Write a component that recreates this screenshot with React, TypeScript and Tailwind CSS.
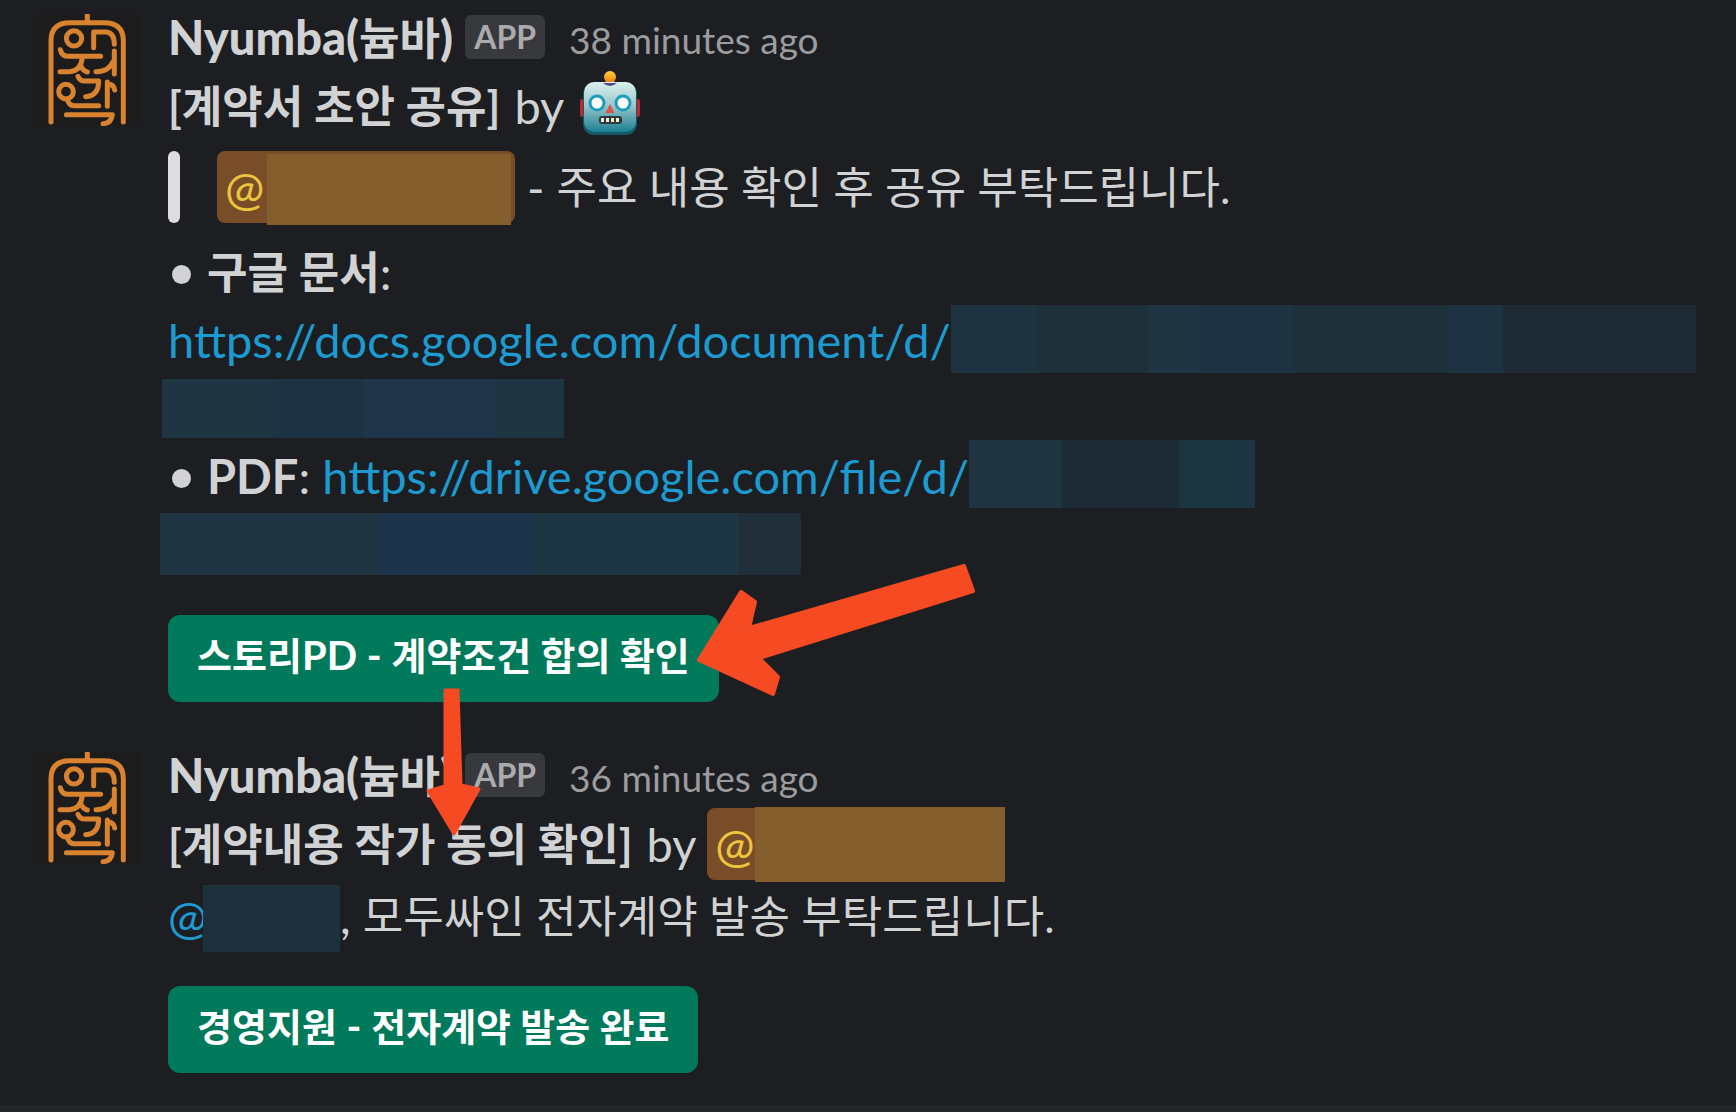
import type { ReactNode } from 'react';
import clsx from 'clsx';

const latin = "font-['Lato','Noto_Sans_CJK_KR',sans-serif]";

function Avatar() {
  return (
    <svg viewBox="36 42 324 336" className="w-[108px] h-28 shrink-0" role="img" aria-label="Nyumba">
      <rect x="36" y="42" width="324" height="336" rx="24" fill="#1c1c1d" />
      <g fill="none" stroke="#d9822f" strokeWidth="15" strokeLinecap="round" strokeLinejoin="round">
        <path d="M93 366V122Q93 68 150 68H252Q310 68 310 122V366" />
        <path d="M202 46V66" />
        <circle cx="162" cy="115" r="23" />
        <path d="M221 143V96H258Q283 98 283 133" />
        <path d="M121 149Q125 169 145 169H242" />
        <path d="M187 172Q183 214 148 215H120M182 196Q188 212 202 216" />
        <path d="M283 153V222M280 184Q266 216 228 215" />
        <circle cx="138" cy="275" r="22" />
        <path d="M174 229Q180 245 198 243H236Q236 288 197 290" />
        <path d="M142 297Q146 317 162 317H236" />
        <path d="M262 319V246M265 252Q282 254 284 270" />
        <path d="M139 344H277Q274 370 249 371" />
      </g>
    </svg>
  );
}

function Robot() {
  return (
    <svg viewBox="0 0 62 66" className="w-[62px] h-[66px] shrink-0" role="img" aria-label="robot">
      <defs>
        <linearGradient id="robot-face" x1="0" y1="0" x2="0" y2="1">
          <stop offset="0" stopColor="#d9f1ee" />
          <stop offset="0.45" stopColor="#9fc9cc" />
          <stop offset="1" stopColor="#1b7f93" />
        </linearGradient>
        <linearGradient id="robot-bulb" x1="0" y1="0" x2="0" y2="1">
          <stop offset="0" stopColor="#ffd23c" />
          <stop offset="1" stopColor="#ef7a12" />
        </linearGradient>
      </defs>
      <rect x="1" y="29" width="8" height="18" rx="3" fill="#c2272d" />
      <rect x="53" y="29" width="8" height="18" rx="3" fill="#c2272d" />
      <ellipse cx="31" cy="15" rx="7" ry="5" fill="#5b4680" />
      <circle cx="31" cy="7" r="6" fill="url(#robot-bulb)" />
      <rect x="4" y="13" width="54" height="52" rx="11" fill="#14596b" />
      <rect x="5" y="12" width="52" height="50" rx="10" fill="url(#robot-face)" />
      <path d="M24 13Q31 19 38 13Z" fill="#5b4680" />
      <circle cx="18" cy="33" r="7" fill="#fff" stroke="#1c9dbd" strokeWidth="3" />
      <circle cx="44" cy="33" r="7" fill="#fff" stroke="#1c9dbd" strokeWidth="3" />
      <path d="M31 34L35.500 43H26.500Z" fill="#dc5148" />
      <rect x="20" y="46" width="23" height="8" rx="3" fill="#2b3a3c" />
      <path d="M22 48h3v4h-3zM27 48h3v4h-3zM32 48h3v4h-3zM37 48h3v4h-3z" fill="#f2ead2" />
    </svg>
  );
}

// Korean glyphs run slightly smaller than the Latin ones
function Ko({ children, bold }: { children: ReactNode; bold?: boolean }) {
  return <span className={clsx('text-[44px]', bold && 'font-bold')}>{children}</span>;
}

function Line({ children, className }: { children: ReactNode; className?: string }) {
  return <div className={clsx('flex items-center h-[68px] whitespace-pre', className)}>{children}</div>;
}

function Bullet() {
  return <span className="mt-1 ml-1 mr-4 h-[19px] w-[19px] rounded-full bg-[#d1d2d3]" />;
}

function MessageHeader({ time }: { time: string }) {
  return (
    <div className="flex items-center h-[72px] whitespace-pre">
      <h2 className="pt-0.5 font-black">
        Nyumba(<span className="text-[44px] font-bold">늄바</span>)
      </h2>
      <span className="mt-0.5 ml-3 flex h-11 w-20 items-center justify-center rounded-md bg-[#37393c] text-[32px] leading-none font-bold text-[#ababad]">
        APP
      </span>
      <time className="ml-6 pt-2 text-[37px] text-[#9b9c9e]">{time}</time>
    </div>
  );
}

function ActionButton({ children }: { children: ReactNode }) {
  return (
    <button
      type="button"
      className="h-[87px] rounded-xl bg-[#007a5a] px-[29px] pb-2 text-[38px] font-bold whitespace-pre text-white hover:bg-[#148567]"
    >
      {children}
    </button>
  );
}

export default function App() {
  return (
    <div className={clsx('relative min-h-screen overflow-hidden bg-[#1c1e21] text-[47px] leading-[68px] text-[#d1d2d3] flex flex-col', latin)}>
      <main className="flex-1 pl-8">
        {/* Draft shared */}
        <article className="flex gap-7">
          <div className="pt-3.5">
            <Avatar />
          </div>
          <div className="flex-1">
            <MessageHeader time="38 minutes ago" />
            <Line>
              <Ko bold>[계약서 초안 공유]</Ko>
              <span className="ml-0.5"> by </span>
              <span className="ml-1 pb-1.5"><Robot /></span>
            </Line>
            <blockquote className="mt-[11px] flex h-[72px] items-center whitespace-pre">
              <span className="h-full w-3 rounded-full bg-[#dddddd]" />
              <span className="ml-[37px] flex h-full w-[298px] items-center rounded-lg bg-[#7a4d29] pl-2">
                <a href="#" className="w-[42px] text-[#ecc53f]">@</a>
                <span className="mt-1 h-[71px] w-[244px] bg-[#845f2d]" />
              </span>
              <span> - </span><Ko>주요 내용 확인 후 공유 부탁드립니다.</Ko>
            </blockquote>
            <Line className="mt-[15px]">
              <Bullet />
              <Ko bold>구글 문서</Ko>:
            </Line>
            <Line>
              <a href="#" className="w-[783px] text-[#1d9bd1] hover:underline">https://docs.google.com/document/d/</a>
              <span className="mb-0.5 flex h-[68px] w-[745px]">
                <span className="w-[85px] bg-[#1e3340]" />
                <span className="w-28 bg-[#1e303a]" />
                <span className="w-[52px] bg-[#203542]" />
                <span className="w-[92px] bg-[#1d3342]" />
                <span className="w-[157px] bg-[#1e313b]" />
                <span className="w-[54px] bg-[#1e3341]" />
                <span className="flex-1 bg-[#1e2b35]" />
              </span>
            </Line>
            <Line className="-ml-1.5">
              <span className="flex h-[59px] w-[402px]">
                <span className="w-28 bg-[#1f3541]" />
                <span className="w-[90px] bg-[#1d3343]" />
                <span className="w-[133px] bg-[#20354a]" />
                <span className="flex-1 bg-[#1e3541]" />
              </span>
            </Line>
            <Line>
              <Bullet />
              <strong className="font-bold">PDF</strong>:{' '}
              <a href="#" className="text-[#1d9bd1] hover:underline">https://drive.google.com/file/d/</a>
              <span className="mb-1 flex h-[68px] w-[286px]">
                <span className="w-[93px] bg-[#1f3340]" />
                <span className="w-[117px] bg-[#1c2b35]" />
                <span className="flex-1 bg-[#1d3540]" />
              </span>
            </Line>
            <Line className="-ml-2">
              <span className="flex h-[62px] w-[641px]">
                <span className="w-[219px] bg-[#1f3541]" />
                <span className="w-[153px] bg-[#1e344a]" />
                <span className="w-[207px] bg-[#1e3543]" />
                <span className="flex-1 bg-[#1f2e38]" />
              </span>
            </Line>
            <div className="mt-[37px] flex">
              <ActionButton>
                스토리<span className="text-[40px]">PD - </span>계약조건 합의 확인
              </ActionButton>
            </div>
          </div>
        </article>

        {/* Author consent */}
        <article className="mt-9 flex gap-7">
          <div className="pt-3.5">
            <Avatar />
          </div>
          <div className="flex-1">
            <MessageHeader time="36 minutes ago" />
            <Line>
              <Ko bold>[계약내용 작가 동의 확인]</Ko>
              <span className="ml-0.5"> by </span>
              <span className="flex h-[72px] w-[298px] items-center rounded-lg bg-[#7a4d29] pl-2">
                <a href="#" className="w-10 text-[#ecc53f]">@</a>
                <span className="h-[75px] flex-1 bg-[#845f2d]" />
              </span>
            </Line>
            <Line className="mt-1">
              <a href="#" className="w-[35px] text-[#1d9bd1]">@</a>
              <span className="mt-1 h-[67px] w-[137px] bg-[#1d303b]" />, <Ko>모두싸인 전자계약 발송 부탁드립니다.</Ko>
            </Line>
            <div className="mt-9 flex">
              <ActionButton>
                경영지원<span className="text-[40px]"> - </span>전자계약 발송 완료
              </ActionButton>
            </div>
          </div>
        </article>
      </main>
      <footer className="h-[7px] bg-[#252629]" />

      {/* Arrows drawn over the messages */}
      <svg
        viewBox="695 560 284 140"
        className="pointer-events-none absolute left-[695px] top-[560px] h-[140px] w-[284px]"
        aria-hidden="true"
      >
        <path
          d="M699 660L741 592L755 602L749 628L964 566L973 591L759 658L778 677L773 694Z"
          fill="#f64a22"
          stroke="#f64a22"
          strokeWidth="4"
          strokeLinejoin="round"
        />
      </svg>
      <svg
        viewBox="424 686 60 152"
        className="pointer-events-none absolute left-[424px] top-[686px] h-[152px] w-[60px]"
        aria-hidden="true"
      >
        <path
          d="M454 834L428 791L445 786L445 690L458 690L461 785L479 789Z"
          fill="#f64a22"
          stroke="#f64a22"
          strokeWidth="3"
          strokeLinejoin="round"
        />
      </svg>
    </div>
  );
}
